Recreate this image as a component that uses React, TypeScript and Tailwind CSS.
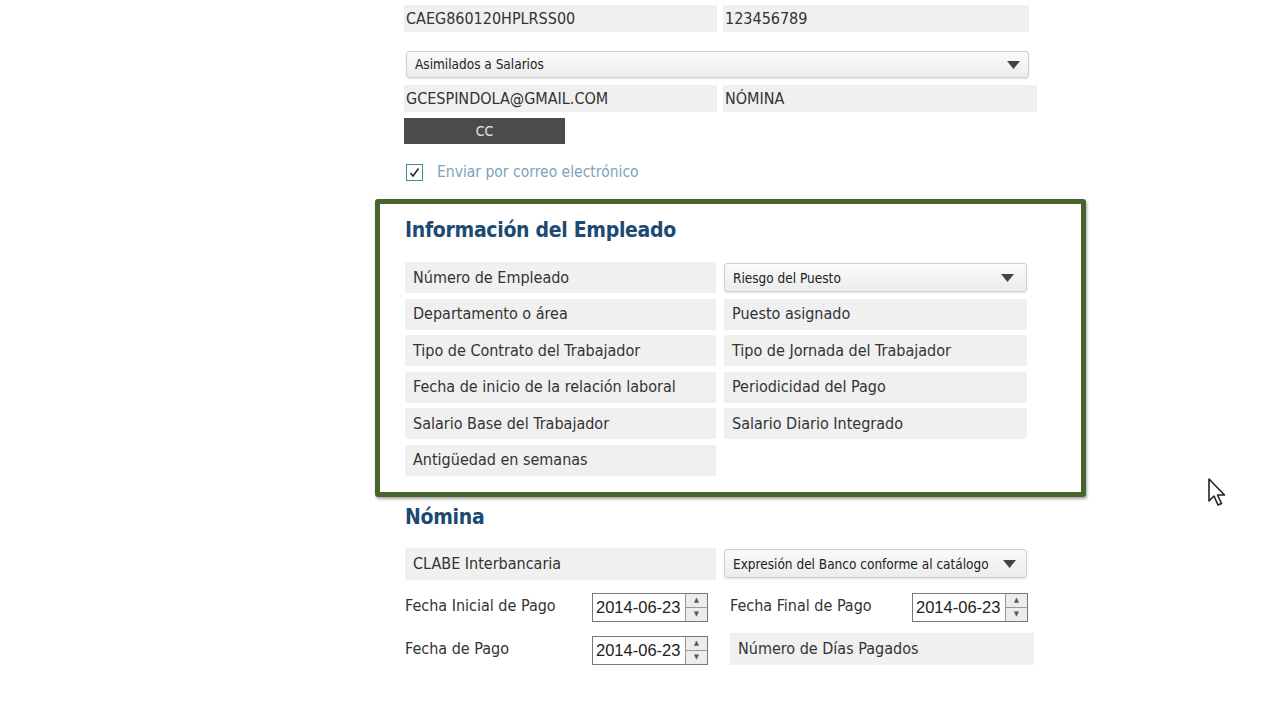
import React from "react";

const Field = ({ children, className = "" }: { children?: React.ReactNode; className?: string }) => (
  <div className={`bg-[#f0f0f0] flex items-center text-[16px] text-[#333] ${className}`}>{children}</div>
);

const Select = ({ label, className = "" }: { label: string; className?: string }) => (
  <div
    className={`flex items-center justify-between pl-[8px] border border-[#cfcfcf] rounded-[3px] bg-gradient-to-b from-[#fafafa] to-[#ececec] shadow-[0_1px_2px_rgba(0,0,0,0.12)] text-[13.5px] text-[#222] ${className}`}
  >
    <span>{label}</span>
    <svg width="13" height="8" viewBox="0 0 13 8">
      <path d="M0 0 L13 0 L6.5 8 Z" fill="#444" />
    </svg>
  </div>
);

const DateInput = () => (
  <div className="flex h-[29px] w-[116px] border border-[#777] bg-white">
    <div className="flex-1 flex items-center pl-[3px] text-[16.5px] text-[#222] font-['Liberation_Sans',Arial,sans-serif]">
      2014-06-23
    </div>
    <div className="w-[22px] flex flex-col border-l border-[#999]">
      <div className="flex-1 bg-[#ececec] border-b border-[#999] flex items-center justify-center text-[7px] text-[#555] leading-none">
        ▲
      </div>
      <div className="flex-1 bg-[#ececec] flex items-center justify-center text-[7px] text-[#555] leading-none">
        ▼
      </div>
    </div>
  </div>
);

const Cursor = () => (
  <svg className="absolute left-[1207px] top-[477px]" width="22" height="32" viewBox="0 0 22 32">
    <path
      d="M2 2 L2 24 L7 19 L11 28 L14.5 26.5 L10.5 18 L17.5 18 Z"
      fill="#fff"
      stroke="#222"
      strokeWidth="1.6"
      strokeLinejoin="round"
    />
  </svg>
);

export default function App() {
  return (
    <div className="w-[1280px] h-[720px] bg-white relative overflow-hidden font-['DejaVu_Sans_Condensed','DejaVu_Sans',sans-serif] text-[#333]">
      <div className="ml-[375px] w-[711px]">
        {/* datos del receptor */}
        <div className="pl-[29px] pt-[5px]">
          <div className="flex gap-[6px]">
            <Field className="w-[313px] h-[27px] px-[2px]">CAEG860120HPLRSS00</Field>
            <Field className="w-[306px] h-[27px] px-[2px]">123456789</Field>
          </div>
          <Select label="Asimilados a Salarios" className="mt-[19px] ml-[2px] w-[623px] h-[27px] pr-[8px]" />
          <div className="flex gap-[6px] mt-[7px]">
            <Field className="w-[313px] h-[27px] px-[2px]">GCESPINDOLA@GMAIL.COM</Field>
            <Field className="w-[314px] h-[27px] px-[2px]">NÓMINA</Field>
          </div>
          <div className="mt-[6px] w-[161px] h-[26px] bg-[#4b4b4b] flex items-center justify-center text-[14px] text-[#e6e6e6]">
            CC
          </div>
          <div className="flex items-center gap-[14px] mt-[17px] ml-[2px]">
            <div className="w-[17px] h-[17px] border-[1.5px] border-[#3b8f95] flex items-center justify-center">
              <svg width="11" height="11" viewBox="0 0 11 11">
                <path d="M1.5 6 L4 9 L9.5 1.5" fill="none" stroke="#222" strokeWidth="1.5" />
              </svg>
            </div>
            <span className="text-[15.5px] text-[#7aa3bd]">Enviar por correo electrónico</span>
          </div>
        </div>

        {/* Información del Empleado */}
        <div className="mt-[15px] border-[5px] border-[#46642c] rounded-[3px] shadow-[1px_2px_3px_rgba(0,0,0,0.35)] bg-white pl-[25px] pt-[16px] h-[298px]">
          <h2 className="text-[21px] font-bold text-[#1b4a72] leading-none tracking-[-0.3px]">Información del Empleado</h2>
          <div className="grid grid-cols-[311px_303px] gap-x-[8px] gap-y-[5.5px] mt-[21px]">
            <Field className="h-[31px] px-[8px]">Número de Empleado</Field>
            <Select label="Riesgo del Puesto" className="mt-[1px] w-[303px] h-[29px] pr-[12px]" />
            <Field className="h-[31px] px-[8px]">Departamento o área</Field>
            <Field className="h-[31px] px-[8px]">Puesto asignado</Field>
            <Field className="h-[31px] px-[8px]">Tipo de Contrato del Trabajador</Field>
            <Field className="h-[31px] px-[8px]">Tipo de Jornada del Trabajador</Field>
            <Field className="h-[31px] px-[8px]">Fecha de inicio de la relación laboral</Field>
            <Field className="h-[31px] px-[8px]">Periodicidad del Pago</Field>
            <Field className="h-[31px] px-[8px]">Salario Base del Trabajador</Field>
            <Field className="h-[31px] px-[8px]">Salario Diario Integrado</Field>
            <Field className="h-[31px] px-[8px]">Antigüedad en semanas</Field>
          </div>
        </div>

        {/* Nómina */}
        <div className="pl-[30px] pt-[10px]">
          <h2 className="text-[21px] font-bold text-[#1b4a72] leading-none tracking-[-0.3px]">Nómina</h2>
          <div className="grid grid-cols-[311px_303px] gap-x-[8px] mt-[20px]">
            <Field className="h-[32px] px-[8px]">CLABE Interbancaria</Field>
            <Select label="Expresión del Banco conforme al catálogo" className="w-[303px] h-[29px] mt-[1px] pr-[10px]" />
          </div>
          <div className="flex mt-[13px]">
            <div className="w-[187px] text-[16px] pt-[1px]">Fecha Inicial de Pago</div>
            <DateInput />
            <div className="w-[204px] pl-[22px] text-[16px] pt-[1px]">Fecha Final de Pago</div>
            <DateInput />
          </div>
          <div className="flex mt-[14px]">
            <div className="w-[187px] text-[16px] pt-[1px]">Fecha de Pago</div>
            <DateInput />
            <Field className="ml-[22px] w-[304px] h-[32px] -mt-[3px] px-[8px]">Número de Días Pagados</Field>
          </div>
        </div>
      </div>
      <Cursor />
    </div>
  );
}
